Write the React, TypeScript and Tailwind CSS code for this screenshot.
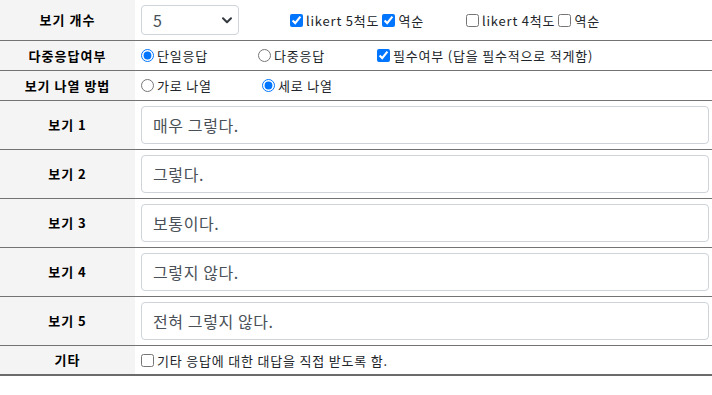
const font = { fontFamily: '"Noto Sans CJK KR", "Noto Sans", sans-serif' };

type RowProps = {
  label: string;
  h: string;
  last?: boolean;
  children: React.ReactNode;
};

function Row({ label, h, last, children }: RowProps) {
  return (
    <div
      className={`flex ${h} ${last ? "border-b-2 border-[#6b6b6b]" : "border-b border-[#737373]"}`}
    >
      <div className="w-[135px] shrink-0 bg-[#f4f4f4] flex items-center justify-center text-[13px] font-bold text-black tracking-[1px]">
        {label}
      </div>
      <div className="flex-1 flex items-center pl-[6px] pr-[3px] bg-white text-[13px] text-[#212529] tracking-[0.8px]">
        {children}
      </div>
    </div>
  );
}

function Check({ checked, label }: { checked?: boolean; label: string }) {
  return (
    <label className="flex items-center">
      <input
        type="checkbox"
        defaultChecked={checked}
        className="m-0 w-[13px] h-[13px] accent-[#0075ff]"
      />
      <span className="ml-[3px] leading-none">{label}</span>
    </label>
  );
}

function Radio({ checked, name, label }: { checked?: boolean; name: string; label: string }) {
  return (
    <label className="flex items-center">
      <input
        type="radio"
        name={name}
        defaultChecked={checked}
        className="m-0 w-[13px] h-[13px] accent-[#0075ff]"
      />
      <span className="ml-[3px] leading-none">{label}</span>
    </label>
  );
}

const choices = ["매우 그렇다.", "그렇다.", "보통이다.", "그렇지 않다.", "전혀 그렇지 않다."];

export default function App() {
  return (
    <div className="w-[712px] h-[395px] bg-white" style={font}>
      {/* 보기 개수 */}
      <Row label="보기 개수" h="h-[41px]">
        <div className="relative w-[98px] h-[30px] border border-[#ced4da] rounded-[4px] flex items-center pl-[11px] text-[16px] text-[#495057]">
          5
          <svg
            className="absolute right-[6px] top-[11px]"
            width="10"
            height="7"
            viewBox="0 0 10 7"
            fill="none"
          >
            <path d="M1 1.2L5 5.2L9 1.2" stroke="#343a40" strokeWidth="2" strokeLinecap="round" strokeLinejoin="round" />
          </svg>
        </div>
        <div className="ml-[51px] w-[176px] flex items-center">
          <Check checked label="likert 5척도" />
          <span className="ml-[3px]" />
          <Check checked label="역순" />
        </div>
        <div className="flex items-center">
          <Check label="likert 4척도" />
          <span className="ml-[3px]" />
          <Check label="역순" />
        </div>
      </Row>

      {/* 다중응답여부 */}
      <Row label="다중응답여부" h="h-[30px]">
        <div className="w-[117px]">
          <Radio checked name="multi" label="단일응답" />
        </div>
        <div className="w-[119px]">
          <Radio name="multi" label="다중응답" />
        </div>
        <Check checked label="필수여부 (답을 필수적으로 적게함)" />
      </Row>

      {/* 보기 나열 방법 */}
      <Row label="보기 나열 방법" h="h-[30px]">
        <div className="w-[121px]">
          <Radio name="dir" label="가로 나열" />
        </div>
        <Radio checked name="dir" label="세로 나열" />
      </Row>

      {/* 보기 1-5 */}
      {choices.map((c, i) => (
        <Row key={i} label={`보기 ${i + 1}`} h="h-[49px]">
          <input
            type="text"
            defaultValue={c}
            className="w-full h-[38px] border border-[#ced4da] rounded-[4px] px-[11px] text-[16px] text-[#495057] tracking-[0.6px] outline-none"
            style={font}
          />
        </Row>
      ))}

      {/* 기타 */}
      <Row label="기타" h="h-[30px]" last>
        <Check label="기타 응답에 대한 대답을 직접 받도록 함." />
      </Row>
    </div>
  );
}
